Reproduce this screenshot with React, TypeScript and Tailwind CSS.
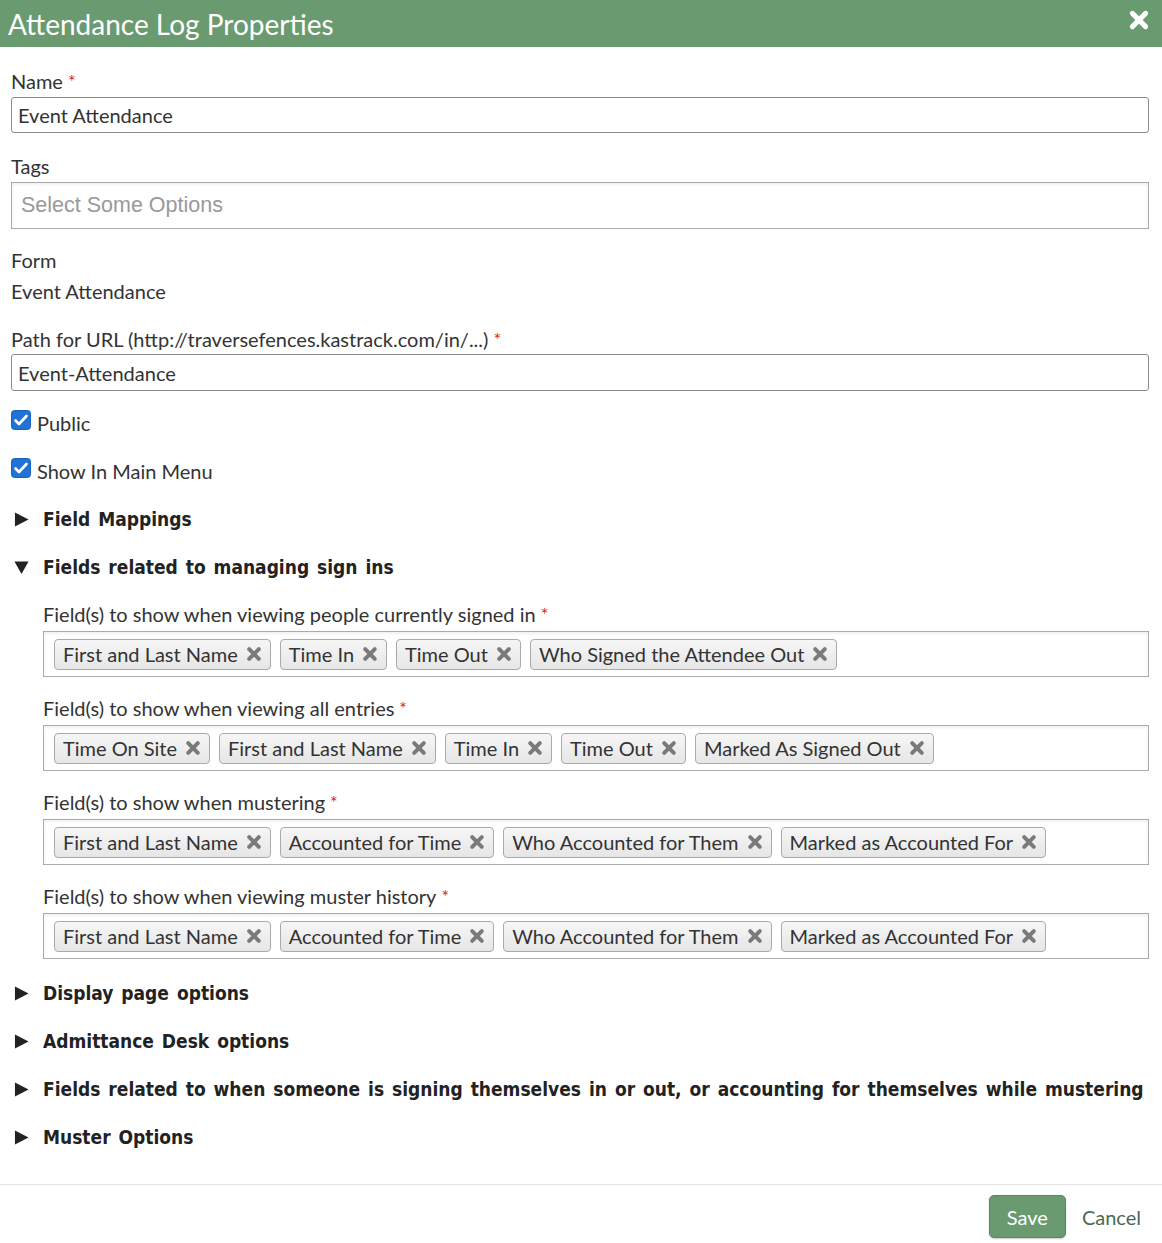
import React from "react";

const body = { fontFamily: "Lato, 'Noto Sans', sans-serif" };
const heading = { fontFamily: "'DejaVu Sans Condensed', 'DejaVu Sans', Verdana, sans-serif", wordSpacing: "2px" };

const Required = () => (
  <span className="ml-[5px] inline-block -translate-y-[1px] text-[18px] leading-none text-[#e21b1b]">*</span>
);

const Chip = ({ label }: { label: string }) => (
  <span className="flex h-[31px] items-center gap-[8px] rounded-[4px] border border-[#aaaaaa] bg-gradient-to-b from-[#f6f6f6] to-[#e6e6e6] px-2 text-[20px] text-[#333]">
    {label}
    <svg viewBox="0 0 16 16" className="h-[16px] w-[16px] text-[#7a7a7a]">
      <path d="M3.2 3.2l9.6 9.6M12.8 3.2l-9.6 9.6" stroke="currentColor" strokeWidth={4} strokeLinecap="round" />
    </svg>
  </span>
);

const ChipField = ({ label, chips }: { label: string; chips: string[] }) => (
  <div className="flex flex-col">
    <label className="mb-[4px] h-[26px] text-[20px] leading-[26px] text-[#333]">
      {label}
      <Required />
    </label>
    <div className="flex h-[46px] items-center gap-[9px] border border-[#aaaaaa] px-[10px] shadow-[inset_0_2px_3px_rgba(0,0,0,0.06)]">
      {chips.map((c) => (
        <Chip key={c} label={c} />
      ))}
    </div>
  </div>
);

const Section = ({ title, open }: { title: string; open?: boolean }) => (
  <div className="flex h-[48px] items-center text-[#222]">
    <span className="flex w-[32px] shrink-0 pl-[3px]">
      <svg viewBox="0 0 16 16" className="h-[15px] w-[15px]">
        {open ? <path d="M0.5 1.5h15L8 15z" fill="#222" /> : <path d="M1 0.5v15L15.5 8z" fill="#222" />}
      </svg>
    </span>
    <span style={heading} className="whitespace-nowrap text-[19px] font-bold font-stretch-condensed">
      {title}
    </span>
  </div>
);

const Check = ({ label }: { label: string }) => (
  <div className="flex h-[48px] items-center gap-[6px]">
    <svg viewBox="0 0 20 20" className="h-[20px] w-[20px] -translate-y-[3px]">
      <rect x="0.5" y="0.5" width="19" height="19" rx="3" fill="#1f73d6" stroke="#1a63b9" />
      <path d="M4.5 10.5l3.5 3.5 7.5-8" fill="none" stroke="#fff" strokeWidth={2.6} strokeLinecap="round" strokeLinejoin="round" />
    </svg>
    <span className="text-[20px] text-[#333]">{label}</span>
  </div>
);

export default function App() {
  const signedIn = ["First and Last Name", "Time In", "Time Out", "Who Signed the Attendee Out"];
  const allEntries = ["Time On Site", "First and Last Name", "Time In", "Time Out", "Marked As Signed Out"];
  const muster = ["First and Last Name", "Accounted for Time", "Who Accounted for Them", "Marked as Accounted For"];

  return (
    <div style={body} className="w-[1162px] bg-white text-[#333]">
      <div className="flex h-[47px] items-center justify-between bg-[#6a9a70] pl-2 pr-[12px]">
        <h1 className="text-[28px] leading-none text-white">Attendance Log Properties</h1>
        <svg viewBox="0 0 20 20" className="h-[22px] w-[22px] -translate-y-[4px]">
          <path d="M4 4l12 12M16 4L4 16" stroke="#fff" strokeWidth={4.6} strokeLinecap="round" />
        </svg>
      </div>

      <div className="pl-[11px] pr-[13px] pt-[21px]">
        <label className="block h-[29px] text-[20px] leading-[26px]">
          Name
          <Required />
        </label>
        <div className="flex h-[36px] items-center rounded-[3px] border border-[#8a8a8a] px-[6px] text-[20px]">
          Event Attendance
        </div>

        <label className="mt-[20px] block h-[29px] text-[20px] leading-[26px]">Tags</label>
        <div
          style={{ fontFamily: "'Liberation Sans', Arial, sans-serif" }}
          className="flex h-[47px] items-center border border-[#aaaaaa] px-[9px] text-[21.5px] text-[#999] shadow-[inset_0_2px_3px_rgba(0,0,0,0.06)]"
        >
          Select Some Options
        </div>

        <div className="mt-[19px] h-[31px] text-[20px] leading-[24px]">Form</div>
        <div className="h-[31px] text-[20px] leading-[24px]">Event Attendance</div>

        <label className="mt-[16px] block h-[28px] text-[20px] leading-[26px]">
          Path for URL (http://traversefences.kastrack.com/in/...)
          <Required />
        </label>
        <div className="flex h-[37px] items-center rounded-[3px] border border-[#8a8a8a] px-[6px] text-[20px]">
          Event-Attendance
        </div>

        <div className="mt-[8px]">
          <Check label="Public" />
          <Check label="Show In Main Menu" />
        </div>

        <Section title="Field Mappings" />
        <Section title="Fields related to managing sign ins" open />

        <div className="flex flex-col gap-[18px] pb-[10px] pl-[32px] pt-[10px]">
          <ChipField label="Field(s) to show when viewing people currently signed in" chips={signedIn} />
          <ChipField label="Field(s) to show when viewing all entries" chips={allEntries} />
          <ChipField label="Field(s) to show when mustering" chips={muster} />
          <ChipField label="Field(s) to show when viewing muster history" chips={muster} />
        </div>

        <Section title="Display page options" />
        <Section title="Admittance Desk options" />
        <Section title="Fields related to when someone is signing themselves in or out, or accounting for themselves while mustering" />
        <Section title="Muster Options" />
      </div>

      <div className="mt-[23px] flex h-[59px] items-start justify-end gap-[16px] border-t border-[#e2e2e2] pr-[21px] pt-[10px]">
        <button className="h-[43px] rounded-[5px] border border-[#5a8660] bg-[#6a9a70] px-[17px] text-[20px] text-white shadow-[0_1px_2px_rgba(0,0,0,0.2)]">
          Save
        </button>
        <button className="h-[43px] text-[20px] text-[#4a6a50]">Cancel</button>
      </div>
    </div>
  );
}
